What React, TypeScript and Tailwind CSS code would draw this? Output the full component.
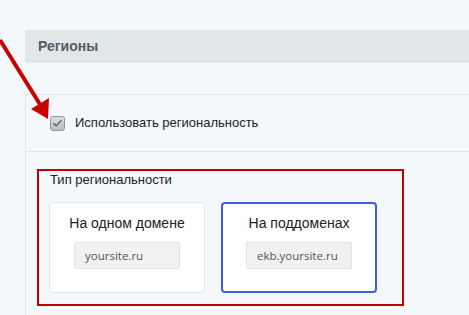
import { Check } from 'lucide-react';

function DomainCard({
  title,
  sample,
  active,
}: {
  title: string;
  sample: string;
  active?: boolean;
}) {
  return (
    <div
      className={
        active
          ? 'flex w-[156px] h-[91px] flex-col items-center rounded-[4px] border-2 border-[#3b60dc] bg-white pt-[9px]'
          : 'flex w-[156px] h-[91px] flex-col items-center rounded-[4px] border border-[#dfe6ec] bg-white pt-[10px]'
      }
    >
      <div className="text-[14px] leading-[20px] text-[#222]">{title}</div>
      <div className="mt-[9px] flex h-[27px] w-[106px] items-center rounded-[2px] border border-[#e3e3e3] bg-[#f1f1f1] pl-[10px] font-['Open_Sans'] text-[11.5px] text-[#555]">
        {sample}
      </div>
    </div>
  );
}

export default function App() {
  return (
    <div className="relative h-[315px] w-[469px] overflow-hidden bg-[#f5f8fa] pl-[25px] pt-[30px] font-['Liberation_Sans',Arial,sans-serif]">
      <div className="flex h-[33px] items-center rounded-l-[3px] bg-[#e1e7e9] pl-[13px] text-[14px] font-bold text-[#535c69]">
        Регионы
      </div>

      <div className="mt-[31px] flex h-[58px] items-center rounded-tl-[3px] border-l border-t border-b border-[#dde5ec] pl-[24px]">
        <span className="flex h-[15px] w-[15px] items-center justify-center rounded-[3px] border border-[#8f979d] bg-gradient-to-b from-[#d9dde0] to-[#b9bfc4]">
          <Check className="h-[11px] w-[11px] text-[#4b5358]" strokeWidth={2.5} />
        </span>
        <span className="ml-[10px] text-[13px] text-[#222]">Использовать региональность</span>
      </div>

      <div className="h-[200px] border-l border-[#dde5ec] pl-[11px] pt-[17px]">
        <div className="h-[137px] w-[367px] border-2 border-[#c00000] pl-[10px]">
          <div className="ml-[1px] text-[13px] leading-[17px] text-[#222]">Тип региональности</div>
          <div className="mt-[14px] flex gap-[16px]">
            <DomainCard title="На одном домене" sample="yoursite.ru" />
            <DomainCard title="На поддоменах" sample="ekb.yoursite.ru" active />
          </div>
        </div>
      </div>

      <svg className="absolute left-0 top-0" width="60" height="130" viewBox="0 0 60 130">
        <line x1="0" y1="40" x2="41" y2="106" stroke="#c80000" strokeWidth="4" />
        <polygon points="31,109 49,98 48,119" fill="#c80000" />
      </svg>
    </div>
  );
}
